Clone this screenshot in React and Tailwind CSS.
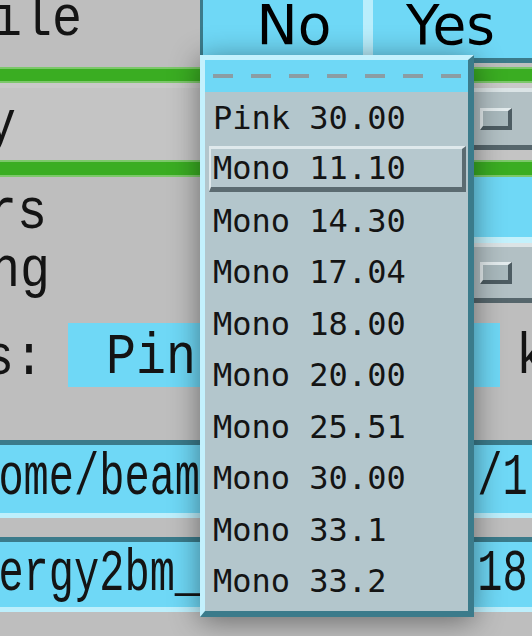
import React from 'react';

const items = ['Pink 30.00', 'Mono 11.10', 'Mono 14.30', 'Mono 17.04', 'Mono 18.00', 'Mono 20.00', 'Mono 25.51', 'Mono 30.00', 'Mono 33.1', 'Mono 33.2'];

const courier = "inline-block scale-y-[1.15] text-[50px] leading-none font-['Liberation_Mono',monospace]";

const Label = ({ box, text }) => (
    <div className={`shrink-0 flex items-start justify-end overflow-hidden whitespace-nowrap ${box}`}>
        <span className={courier}>{text}</span>
    </div>
);

const OptionButton = ({ className }) => (
    <div className={`flex-1 flex items-center justify-end pr-[20px] bg-[#b2c0c4] border-t-[4px] border-t-[#dbe4e6] border-b-[5px] border-b-[#56666c] ${className}`}>
        <div className="w-[32px] h-[22px] bg-[#a9b9bd] border-t-[3px] border-l-[3px] border-t-[#e4ecee] border-l-[#e4ecee] border-b-[4px] border-r-[4px] border-b-[#4d5c62] border-r-[#4d5c62]" />
    </div>
);

const GreenBar = ({ className }) => (
    <div className={`bg-[#3aad22] border-y-2 border-[#7cc86a] ${className}`} />
);

const Entry = ({ text, className }) => (
    <div className={`flex items-center overflow-hidden whitespace-pre bg-[#6fd8f6] border-t-[5px] border-t-[#3b7b8b] border-b-[5px] border-b-[#bdeffc] ${className}`}>
        <span className="inline-block ml-[-52px] scale-y-[1.4] text-[42px] leading-none font-['Liberation_Mono',monospace]">{text}</span>
    </div>
);

export default function App() {
    return (
        <div className="relative w-[532px] h-[636px] overflow-hidden bg-[#bebebe] text-[#141414]">
            {/* top row: label + No / Yes */}
            <div className="flex h-[63px]">
                <div className="w-[82px] shrink-0 flex items-start justify-end overflow-hidden whitespace-nowrap">
                    <span className={`${courier} mt-[-5px]`}>Profile</span>
                </div>
                <div className="w-[118px] shrink-0" />
                <div className="flex-1 flex bg-[#6fd8f6] border-l-[3px] border-l-[#3b7b8b] border-b-[5px] border-b-[#3b7b8b] font-['DejaVu_Sans',sans-serif] text-[55px] leading-none text-black">
                    <div className="w-[160px] flex items-center justify-center pl-[22px] pb-[8px]">No</div>
                    <div className="w-[10px] bg-[#b9eefc]" />
                    <div className="flex-1 flex items-center justify-center pb-[8px] pr-[4px]">Yes</div>
                </div>
            </div>

            <GreenBar className="mt-[4px] h-[16px]" />

            {/* energy row */}
            <div className="flex h-[77px] border-t-[5px] border-[#c9c9c9] bg-[#c4c4c4]">
                <Label box="w-[16px] h-[62px] pt-[12px]" text="Energy" />
                <div className="w-[189px] shrink-0" />
                <OptionButton className="h-[62px]" />
            </div>

            <GreenBar className="h-[17px]" />

            {/* filters row */}
            <div className="flex h-[66px]">
                <Label box="w-[47px] pt-[11px]" text="Filters" />
                <div className="w-[158px] shrink-0" />
                <div className="flex-1 bg-[#6fd8f6] border-b-[6px] border-[#c3f1fc]" />
            </div>

            {/* binning row */}
            <div className="flex h-[62px]">
                <Label box="w-[50px] pt-[3px]" text="Binning" />
                <div className="w-[155px] shrink-0" />
                <OptionButton className="h-[60px]" />
            </div>

            {/* scintillator row */}
            <div className="flex h-[64px] mt-[18px]">
                <Label box="w-[44px] pt-[11px]" text="Units:" />
                <div className="w-[24px] shrink-0" />
                <div className="w-[432px] shrink-0 flex items-start pt-[10px] pl-[38px] bg-[#6fd8f6] overflow-hidden whitespace-nowrap">
                    <span className={courier}>Pink 30.00</span>
                </div>
                <div className="w-[16px] shrink-0" />
                <div className="flex items-start pt-[10px] whitespace-nowrap">
                    <span className={courier}>keV</span>
                </div>
            </div>

            <Entry className="mt-[53px] h-[78px]" text="/home/beams/2bmb/logs/1" />
            <Entry className="mt-[19px] h-[75px]" text="energy2bm_tomo_lut_v 18" />

            {/* posted option menu */}
            <div className="absolute left-[200px] top-[55px] w-[274px] h-[562px] flex flex-col bg-[#b3c6cc] border-t-[5px] border-l-[5px] border-t-[#c3f1fd] border-l-[#c3f1fd] border-r-[6px] border-b-[6px] border-r-[#3b7b8b] border-b-[#3b7b8b] shadow-[0_4px_28px_rgba(0,0,0,0.45)]">
                <div className="h-[32px] shrink-0 bg-[#6fd8f6] flex items-center gap-[18px] pl-[8px] overflow-hidden">
                    {[0, 1, 2, 3, 4, 5, 6].map((i) => (
                        <span key={i} className="shrink-0 w-[20px] h-[4px] bg-[#8b9da4]" />
                    ))}
                </div>
                <div className="flex flex-col font-['DejaVu_Sans_Mono',monospace] text-[32px] leading-none">
                    {items.map((label, i) => (
                        <div key={i} className="h-[51.5px] flex items-center whitespace-nowrap">
                            {i === 1 ? (
                                <div className="ml-[4px] w-[257px] h-[46px] flex items-center pl-[2px] bg-[#b6c8ce] border-t-[3px] border-l-[2px] border-t-[#dfe9ec] border-l-[#dfe9ec] border-b-[5px] border-r-[4px] border-b-[#5b6b71] border-r-[#5b6b71]">
                                    {label}
                                </div>
                            ) : (
                                <span className="pl-[8px]">{label}</span>
                            )}
                        </div>
                    ))}
                </div>
            </div>
        </div>
    );
}
